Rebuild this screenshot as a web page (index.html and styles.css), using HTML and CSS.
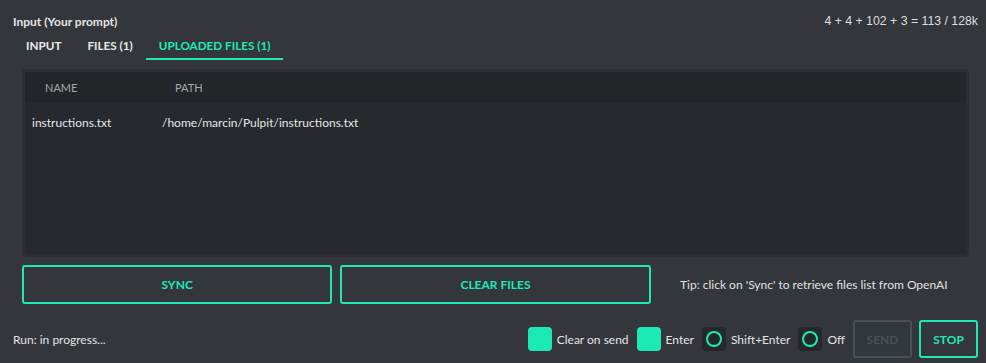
FILE: index.html
```html
<!DOCTYPE html>
<html lang="en">
<head>
    <meta charset="UTF-8">
    <meta name="viewport" content="width=device-width, initial-scale=1.0">
    <title>Input (Your prompt)</title>
    <link rel="stylesheet" href="styles.css">
</head>
<body>
    <div class="app">
        <div class="top">
            <span class="title">Input (Your prompt)</span>
            <span class="tokens">4 + 4 + 102 + 3 = 113 / 128k</span>
        </div>

        <div class="tabs">
            <div class="tab">INPUT</div>
            <div class="tab">FILES (1)</div>
            <div class="tab active">UPLOADED FILES (1)</div>
        </div>

        <div class="panel">
            <table class="files">
                <thead>
                    <tr>
                        <th class="col-name">NAME</th>
                        <th>PATH</th>
                    </tr>
                </thead>
                <tbody>
                    <tr>
                        <td>instructions.txt</td>
                        <td>/home/marcin/Pulpit/instructions.txt</td>
                    </tr>
                </tbody>
            </table>
        </div>

        <div class="actions">
            <button class="btn">SYNC</button>
            <button class="btn">CLEAR FILES</button>
            <p class="tip">Tip: click on 'Sync' to retrieve files list from OpenAI</p>
        </div>

        <div class="bottom">
            <span class="status">Run: in progress...</span>
            <div class="controls">
                <label class="opt"><span class="check on"></span>Clear on send</label>
                <label class="opt"><span class="check on"></span>Enter</label>
                <label class="opt"><span class="check radio"></span>Shift+Enter</label>
                <label class="opt"><span class="check radio"></span>Off</label>
                <button class="btn small disabled">SEND</button>
                <button class="btn small">STOP</button>
            </div>
        </div>
    </div>
</body>
</html>
```

FILE: styles.css
```css
body {
    margin: 0;
    background-color: #33373b;
    color: #e4e4e4;
    font-family: 'Lato', 'Noto Sans', sans-serif;
    font-size: 12px;
}
.app {
    padding: 0 8px 0 13px;
}
.top {
    display: flex;
    justify-content: space-between;
    align-items: center;
    height: 22px;
    padding-top: 10px;
}
.title {
    font-weight: bold;
    font-size: 12px;
}
.tokens {
    font-family: 'Liberation Sans', Arial, sans-serif;
    font-size: 12.3px;
    color: #dedede;
}
.tabs {
    display: flex;
    height: 28px;
}
.tab {
    padding: 0 13px;
    font-weight: bold;
    font-size: 11.7px;
    line-height: 27px;
    border-bottom: 2px solid transparent;
    color: #eaeaea;
}
.tab.active {
    color: #1de9b6;
    border-bottom-color: #1de9b6;
}
.panel {
    margin: 9px 9px 0;
    height: 182px;
    padding: 3px;
    background-color: #2b2f33;
    border-radius: 4px;
}
.files {
    width: 100%;
    height: 100%;
    border-collapse: collapse;
    background-color: #26292d;
}
.files th {
    text-align: left;
    font-weight: normal;
    font-size: 11px;
    color: #a8a8a8;
    height: 31px;
    padding: 0 0 0 20px;
    background-color: #232629;
}
.files th.col-name {
    width: 110px;
}
.files td {
    vertical-align: top;
    padding: 12px 0 0 7px;
    color: #e6e6e6;
}
.actions {
    display: grid;
    grid-template-columns: 1fr 1fr 1fr;
    gap: 8px;
    margin: 8px 9px 0;
}
.btn {
    background: transparent;
    border: 2px solid #1de9b6;
    border-radius: 3px;
    color: #1de9b6;
    font-family: 'Lato', 'Noto Sans', sans-serif;
    font-weight: bold;
    font-size: 12px;
    height: 39px;
    cursor: pointer;
}
.tip {
    margin: 0;
    text-align: center;
    line-height: 39px;
    font-size: 12px;
    color: #e0e0e0;
}
.bottom {
    display: flex;
    justify-content: space-between;
    align-items: center;
    margin-top: 16px;
}
.status {
    font-size: 12px;
}
.controls {
    display: flex;
    align-items: center;
}
.opt {
    display: flex;
    align-items: center;
    gap: 5px;
    margin-right: 8px;
}
.check {
    width: 24px;
    height: 24px;
    border-radius: 4px;
    box-sizing: border-box;
    display: flex;
    align-items: center;
    justify-content: center;
}
.check.on {
    background-color: #1de9b6;
}
.check.radio {
    background-color: #24282b;
}
.check.radio::after {
    content: '';
    width: 12px;
    height: 12px;
    border: 2px solid #1de9b6;
    border-radius: 50%;
}
.btn.small {
    width: 59px;
    height: 38px;
}
.btn.small + .btn.small {
    margin-left: 7px;
}
.btn.disabled {
    border-color: #4a4f54;
    color: #4a5055;
}
```
